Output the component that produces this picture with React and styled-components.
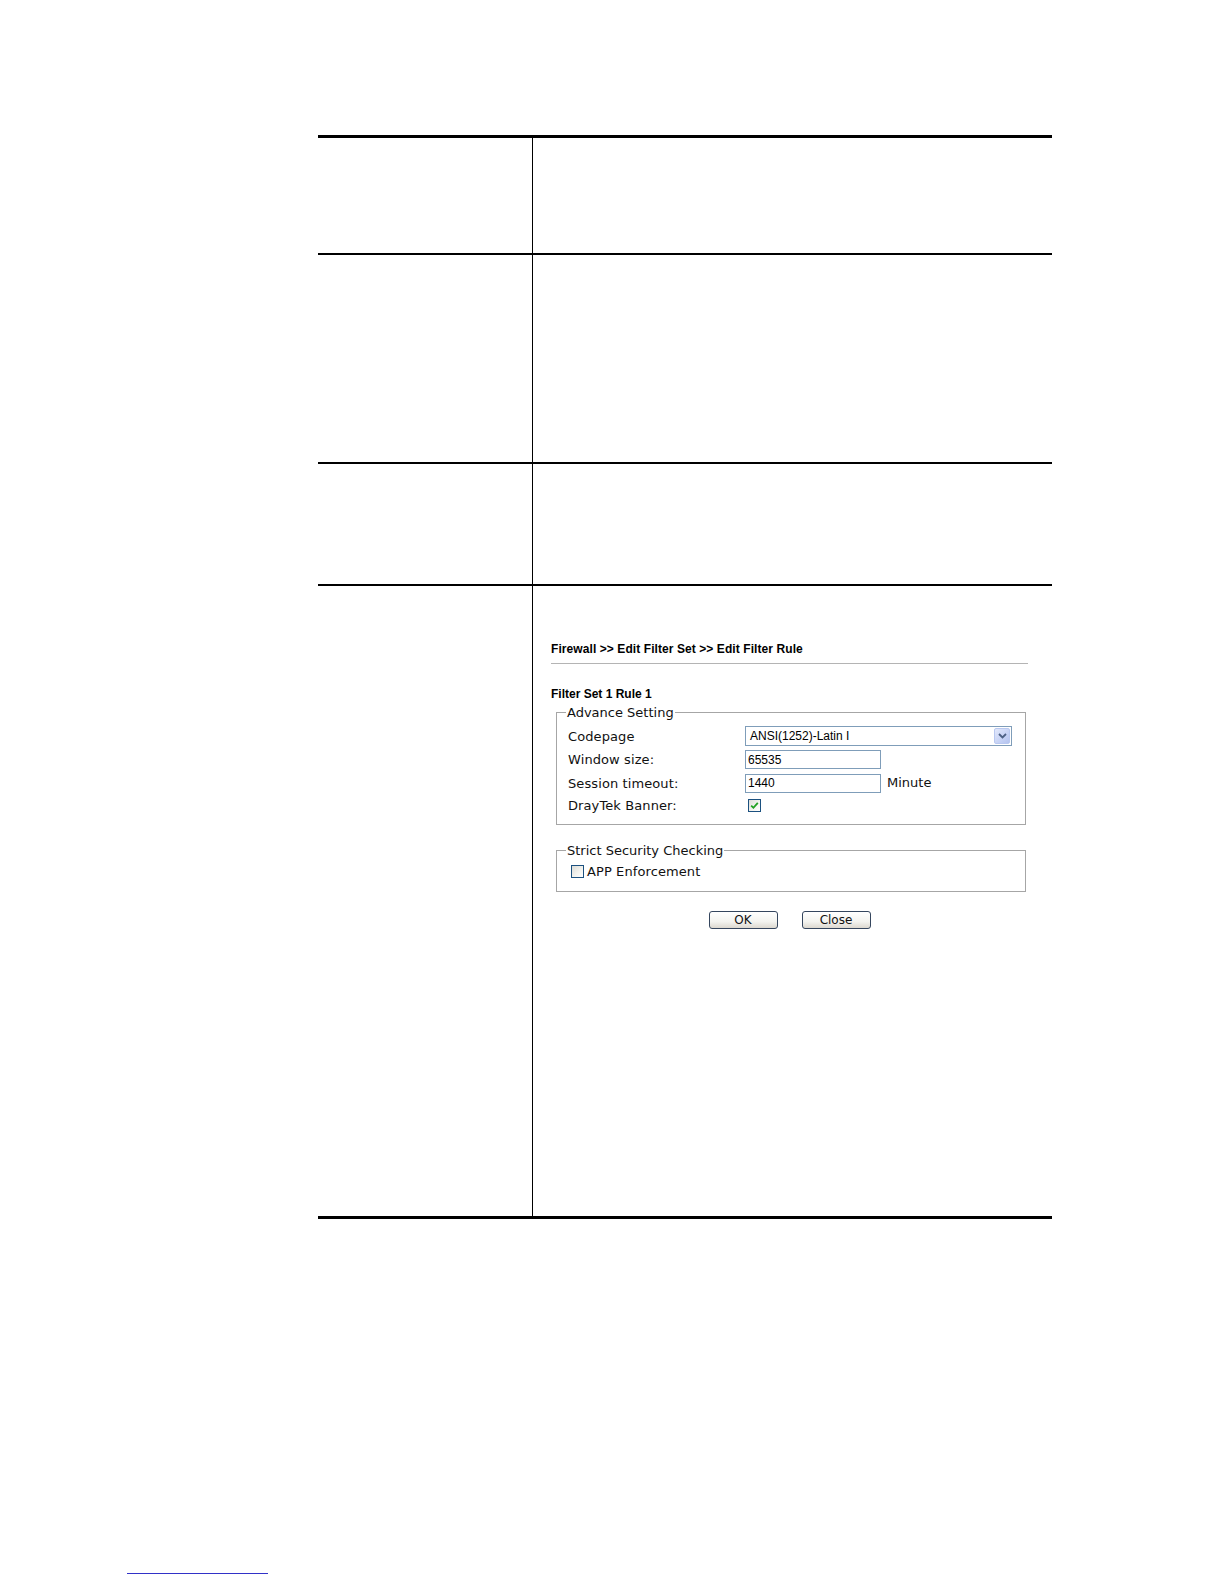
import styled, { createGlobalStyle } from "styled-components";

const GlobalStyle = createGlobalStyle`
  html, body {
    margin: 0;
    padding: 0;
    background: #fff;
  }
  body {
    font-family: "DejaVu Sans", Verdana, sans-serif;
    color: #000;
  }
`;

const Page = styled.div`
  width: 1224px;
  height: 1584px;
  padding-top: 135px;
  box-sizing: border-box;
  overflow: hidden;
`;

const Table = styled.div`
  margin-left: 318px;
  width: 734px;
  border-top: 3px solid #000;
`;

const Row = styled.div`
  display: grid;
  grid-template-columns: 215px 1fr;
  height: ${(p) => p.$h}px;
  border-bottom: ${(p) => (p.$last ? 3 : 2)}px solid #000;
`;

const LeftCell = styled.div`
  border-right: 1px solid #000;
`;

const RightCell = styled.div``;

const Shot = styled.div`
  width: 477px;
  padding: 56px 0 0 18px;
`;

const Crumb = styled.div`
  font: bold 12px/14px "Liberation Sans", Arial, sans-serif;
  letter-spacing: 0.08px;
  padding-bottom: 7px;
  border-bottom: 1px solid #b4b4b4;
`;

const RuleTitle = styled.div`
  margin-top: 23px;
  font: bold 12px/14px "Liberation Sans", Arial, sans-serif;
`;

const Group = styled.fieldset`
  margin: ${(p) => p.$top}px 0 0 5px;
  width: 470px;
  box-sizing: border-box;
  border: 1px solid #a6a6a6;
  padding: ${(p) => p.$pad};
  min-inline-size: 0;
`;

const Legend = styled.legend`
  font-size: 13px;
  line-height: 15px;
  padding: 0 1px;
  margin-left: -2px;
  color: #111;
`;

const FieldRow = styled.div`
  display: grid;
  grid-template-columns: 177px auto;
  align-items: center;
  height: ${(p) => p.$h}px;
`;

const Label = styled.span`
  font-size: 13px;
  letter-spacing: 0.1px;
  color: #111;
`;

const Control = styled.div`
  display: flex;
  align-items: center;
`;

const FakeSelect = styled.div`
  width: 267px;
  height: 20px;
  box-sizing: border-box;
  border: 1px solid #7f9db9;
  display: flex;
  align-items: center;
  padding-left: 4px;
  font: 12px "Liberation Sans", Arial, sans-serif;
`;

const ArrowBox = styled.span`
  margin-left: auto;
  margin-right: 1px;
  width: 16px;
  height: 16px;
  box-sizing: border-box;
  border: 1px solid #b9c8f0;
  border-radius: 2px;
  background: linear-gradient(135deg, #e2e8fb 0%, #c6d2f5 60%, #b4c3ef 100%);
  display: flex;
  align-items: center;
  justify-content: center;
`;

const TextBox = styled.input`
  width: 136px;
  height: 19px;
  box-sizing: border-box;
  border: 1px solid #7f9db9;
  padding: 0 2px;
  margin: 0;
  font: 12px "Liberation Sans", Arial, sans-serif;
  color: #000;
  outline: none;
`;

const Unit = styled.span`
  margin-left: 6px;
  margin-top: -2px;
  font-size: 13px;
  color: #111;
`;

const Box = styled.span`
  width: 13px;
  height: 13px;
  box-sizing: border-box;
  border: 1px solid #1c5180;
  background: linear-gradient(135deg, #dcdcd7 0%, #f4f4f0 60%, #fff 100%);
  display: inline-flex;
  align-items: center;
  justify-content: center;
  margin-left: ${(p) => p.$ml || 0}px;
`;

const CheckLine = styled.div`
  display: flex;
  align-items: center;
  gap: 3px;
  height: 20px;
  font-size: 13px;
  letter-spacing: 0.1px;
  color: #111;
`;

const Buttons = styled.div`
  display: flex;
  justify-content: center;
  gap: 24px;
  margin-top: 19px;
  padding-left: 5px;
  width: 467px;
`;

const Button = styled.button`
  width: 69px;
  height: 18px;
  padding: 0;
  border: 1px solid #35465e;
  border-radius: 3px;
  background: linear-gradient(#ffffff 0%, #f3f3ef 60%, #dcd8cf 100%);
  font: 12px/14px "DejaVu Sans", Verdana, sans-serif;
  color: #111;
`;

const FootLine = styled.div`
  margin: 354px 0 0 127px;
  width: 141px;
  height: 1px;
  background: #3232c8;
`;

function Checkbox({ checked, ml }) {
  return (
    <Box $ml={ml}>
      {checked && (
        <svg width="9" height="9" viewBox="0 0 9 9">
          <path d="M1.2 4.6 L3.4 6.8 L7.8 1.8" fill="none" stroke="#21a121" strokeWidth="1.8" />
        </svg>
      )}
    </Box>
  );
}

function FilterRuleShot() {
  return (
    <Shot>
      <Crumb>Firewall &gt;&gt; Edit Filter Set &gt;&gt; Edit Filter Rule</Crumb>
      <RuleTitle>Filter Set 1 Rule 1</RuleTitle>
      <Group $top={4} $pad="4px 0 7px 11px">
        <Legend>Advance Setting</Legend>
        <FieldRow $h={24}>
          <Label>Codepage</Label>
          <Control>
            <FakeSelect>
              ANSI(1252)-Latin I
              <ArrowBox>
                <svg width="9" height="6" viewBox="0 0 9 6">
                  <path d="M1 1 L4.5 4.5 L8 1" fill="none" stroke="#4d6185" strokeWidth="1.8" />
                </svg>
              </ArrowBox>
            </FakeSelect>
          </Control>
        </FieldRow>
        <FieldRow $h={23.5}>
          <Label>Window size:</Label>
          <Control>
            <TextBox defaultValue="65535" />
          </Control>
        </FieldRow>
        <FieldRow $h={23}>
          <Label>Session timeout:</Label>
          <Control>
            <TextBox defaultValue="1440" />
            <Unit>Minute</Unit>
          </Control>
        </FieldRow>
        <FieldRow $h={22}>
          <Label>DrayTek Banner:</Label>
          <Control>
            <Checkbox checked ml={3} />
          </Control>
        </FieldRow>
      </Group>
      <Group $top={18} $pad="4px 0 9px 11px">
        <Legend>Strict Security Checking</Legend>
        <CheckLine>
          <Checkbox ml={3} />
          APP Enforcement
        </CheckLine>
      </Group>
      <Buttons>
        <Button>OK</Button>
        <Button>Close</Button>
      </Buttons>
    </Shot>
  );
}

export default function App() {
  return (
    <Page>
      <GlobalStyle />
      <Table>
        <Row $h={115}>
          <LeftCell />
          <RightCell />
        </Row>
        <Row $h={207}>
          <LeftCell />
          <RightCell />
        </Row>
        <Row $h={120}>
          <LeftCell />
          <RightCell />
        </Row>
        <Row $h={630} $last>
          <LeftCell />
          <RightCell>
            <FilterRuleShot />
          </RightCell>
        </Row>
      </Table>
      <FootLine />
    </Page>
  );
}
